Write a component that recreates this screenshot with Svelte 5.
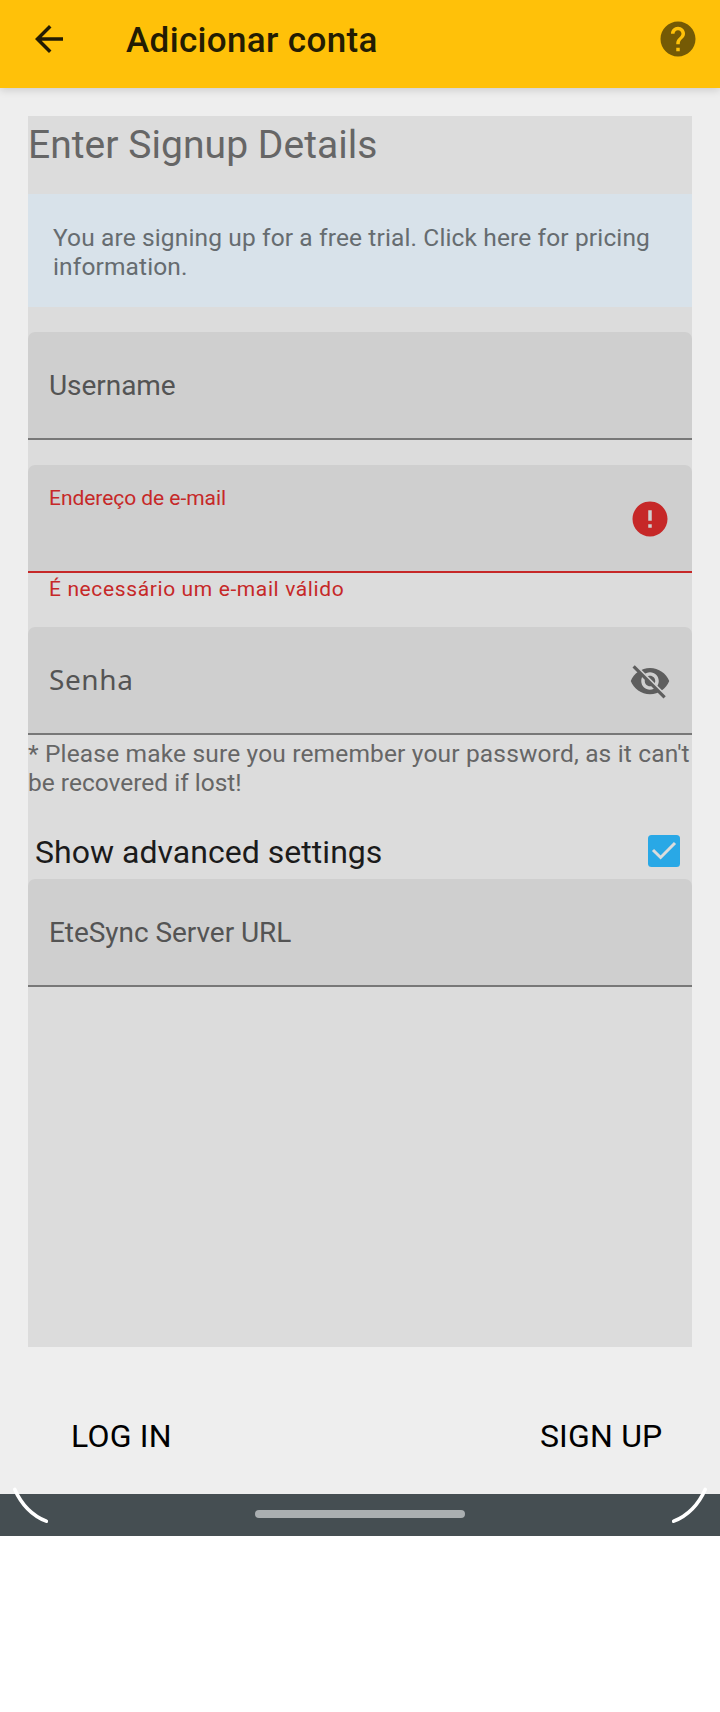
<script>
  const ink = '#5e5e5e';
</script>

<div class="screen">
  <header class="appbar">
    <svg class="icon" viewBox="0 0 24 24"><path fill="#231c03" d="M20 11H7.83l5.59-5.59L12 4l-8 8 8 8 1.41-1.41L7.83 13H20v-2z" /></svg>
    <h1>Adicionar conta</h1>
    <svg class="icon" viewBox="0 0 24 24"><path fill="#755a05" d="M12 2C6.48 2 2 6.48 2 12s4.48 10 10 10 10-4.48 10-10S17.52 2 12 2zm1 17h-2v-2h2v2zm2.07-7.75l-.9.92C13.45 12.9 13 13.5 13 15h-2v-.5c0-1.1.45-2.1 1.17-2.83l1.24-1.26c.37-.36.59-.86.59-1.41 0-1.1-.9-2-2-2s-2 .9-2 2H8c0-2.21 1.79-4 4-4s4 1.79 4 4c0 .88-.36 1.68-.93 2.25z" /></svg>
  </header>

  <main class="form">
    <h2>Enter Signup Details</h2>
    <div class="notice">You are signing up for a free trial. Click here for pricing<br />information.</div>

    <div class="field"><span class="label">Username</span></div>

    <div class="field email error">
      <span class="label small">Endereço de e-mail</span>
      <svg class="icon" viewBox="0 0 24 24"><path fill="#c62828" d="M12 2C6.48 2 2 6.48 2 12s4.48 10 10 10 10-4.48 10-10S17.52 2 12 2zm1 15h-2v-2h2v2zm0-4h-2V7h2v6z" /></svg>
    </div>
    <div class="helper">É necessário um e-mail válido</div>

    <div class="field">
      <span class="label password">Senha</span>
      <svg class="icon" viewBox="0 0 24 24">
        <defs><clipPath id="eye-cut"><path d="M4.54 3L24 22.46V0H4.54zM0 1L23 24H0z" /></clipPath></defs>
        <path clip-path="url(#eye-cut)" fill={ink} d="M12 4.5C7 4.5 2.73 7.61 1 12c1.73 4.39 6 7.5 11 7.5s9.27-3.11 11-7.5c-1.73-4.39-6-7.5-11-7.5zM12 17c-2.76 0-5-2.24-5-5s2.24-5 5-5 5 2.24 5 5-2.24 5-5 5zm0-8c-1.66 0-3 1.34-3 3s1.34 3 3 3 3-1.34 3-3-1.34-3-3-3z" />
        <path fill={ink} d="M2 4.27L3.27 3 21 20.73 19.73 22z" />
      </svg>
    </div>

    <p class="note">* Please make sure you remember your password, as it can't<br /><span class="second">be recovered if lost!</span></p>

    <div class="toggle">
      <span>Show advanced settings</span>
      <svg class="check" viewBox="0 0 32 32">
        <rect width="32" height="32" rx="3.5" fill="#29a8e6" />
        <path d="M5 15l7.6 7.5L27 8" fill="none" stroke="#dcdcdc" stroke-width="3" />
      </svg>
    </div>

    <div class="field"><span class="label">EteSync Server URL</span></div>
  </main>

  <footer class="actions">
    <span>LOG IN</span>
    <span>SIGN UP</span>
  </footer>

  <nav class="gesture">
    <svg class="corner left" viewBox="0 0 40 40"><path d="M4.8 5.4Q15 28.5 36.3 37.2" /></svg>
    <div class="pill"></div>
    <svg class="corner right" viewBox="0 0 40 40"><path d="M35.2 5.4Q25 28.5 3.7 37.2" /></svg>
  </nav>
</div>

<style>
  :global(body) { margin: 0; background: #fff; }
  .screen { width: 720px; height: 1712px; display: flex; flex-direction: column; background: linear-gradient(#eee 1536px, #fff 1536px); font-family: Roboto, "Noto Sans", sans-serif; }
  h1, h2, p { margin: 0; font-weight: 400; }
  .icon { width: 42px; height: 42px; flex: none; display: block; }
  .appbar { box-sizing: border-box; height: 88px; padding: 0 21px 10px 28px; display: flex; align-items: center; background: #ffc109; box-shadow: 0 2px 8px rgba(0, 0, 0, 0.15); flex: none; }
  .appbar h1 { flex: 1; margin-left: 56px; padding-top: 2px; font-size: 35px; font-weight: 500; line-height: 41px; letter-spacing: 0.35px; color: #231c03; }
  .form { box-sizing: border-box; width: 664px; height: 1231px; margin: 28px 28px 0; display: flex; flex-direction: column; background: #dcdcdc; flex: none; }
  h2 { box-sizing: border-box; height: 74px; margin-bottom: 4px; padding-top: 5px; font-size: 39px; line-height: 48px; letter-spacing: 0.05px; color: #666; }
  .notice { box-sizing: border-box; height: 113px; padding: 29px 25px 0; margin-bottom: 25px; font-size: 24.5px; line-height: 29px; letter-spacing: 0.13px; color: #666c70; background: #d8e2ea; white-space: nowrap; }
  .field { box-sizing: border-box; height: 108px; padding: 0 21px; display: flex; align-items: center; justify-content: space-between; flex: none; background: #cfcfcf; border-bottom: 2px solid #787878; border-radius: 7px 7px 0 0; }
  .field .icon { margin-top: 2px; }
  .label { padding-top: 2px; font-size: 28px; line-height: 34px; letter-spacing: -0.05px; color: #545454; }
  .label.password { padding-top: 0; font-family: "Noto Sans", sans-serif; letter-spacing: 0.6px; position: relative; top: -1px; }
  .email { margin-top: 25px; }
  .error { border-color: #c62828; }
  .label.small { align-self: flex-start; margin-top: 19px; font-size: 21px; line-height: 25px; color: #c62828; }
  .helper { height: 54px; padding: 4px 21px 0; box-sizing: border-box; font-size: 21px; line-height: 25px; letter-spacing: 0.62px; color: #c62828; }
  .note { padding-top: 4px; font-size: 24.5px; line-height: 29px; letter-spacing: 0.165px; color: #666; white-space: nowrap; }
  .second { letter-spacing: 0; }
  .toggle { box-sizing: border-box; height: 56px; margin-top: 26px; padding: 0 12px 0 7px; display: flex; align-items: center; justify-content: space-between; font-size: 32px; line-height: 38px; letter-spacing: 0.03px; color: #1b1b1b; }
  .toggle span { padding-top: 2px; }
  .check { width: 32px; height: 32px; }
  .actions { height: 147px; box-sizing: border-box; padding: 70px 57.5px 0 71px; display: flex; justify-content: space-between; font-size: 32px; line-height: 38px; letter-spacing: 0.2px; color: #000; flex: none; }
  .gesture { position: relative; height: 42px; display: flex; justify-content: center; align-items: center; background: #454e52; flex: none; }
  .pill { width: 210px; height: 8px; margin-bottom: 2px; border-radius: 4px; background: #aaafb1; }
  .corner { position: absolute; top: -10px; width: 40px; height: 40px; overflow: visible; }
  .corner path { fill: none; stroke: #fff; stroke-width: 3.6; stroke-linecap: round; }
  .left { left: 10px; }
  .right { right: 10px; }
</style>
